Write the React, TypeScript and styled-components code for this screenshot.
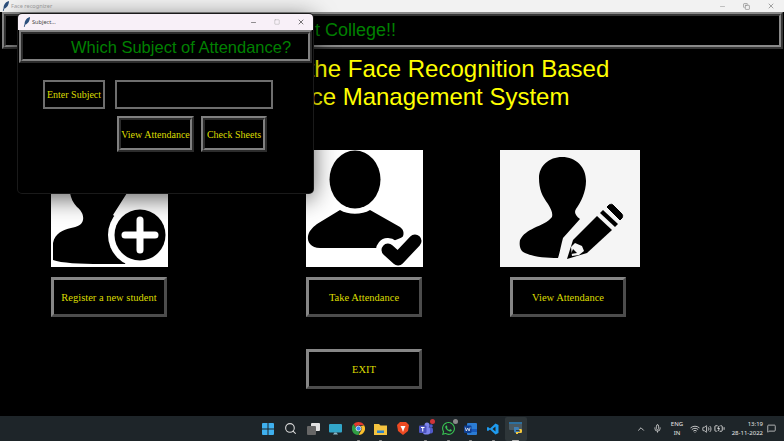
import { ReactElement, ReactNode } from "react";
import styled, { createGlobalStyle } from "styled-components";
import { BatteryCharging, ChevronUp, Copy, MessageSquare, Mic, Minus, Search, Square, Volume2, Wifi, X } from "lucide-react";
import { SiWhatsapp } from "react-icons/si";

const GlobalStyle = createGlobalStyle`
  html, body {
    background: #000;
    height: 100%;
    margin: 0;
    overflow: hidden;
  }
`;

function Feather(): ReactElement {
  return (
    <svg width="8" height="10" viewBox="0 0 8 10">
      <path d="M7 0C3.500 1 1.500 4 1.600 7L.8 9.800l.8.100.8-2.400C5 7 7 3.500 7 0z" fill="#2c4f7c" />
    </svg>
  );
}

function RegisterPicture(): ReactElement {
  return (
    <svg width="117" height="117" viewBox="0 0 117 117">
      <rect width="117" height="117" fill="#fff" />
      <ellipse cx="48" cy="24" rx="27" ry="27" fill="#000" />
      <path d="M19 43c1 5 3 10 7 14 4 3 7 8 6 13-1 5-6 7-12 8-8 2-16 5-18 15v17c8 3 27 4 48 4h24l16-29-28-20 14-22z" fill="#000" />
      <circle cx="89" cy="85" r="32" fill="#fff" />
      <circle cx="89" cy="85" r="25.500" fill="#000" />
      <path d="M89 70v30M74 85h30" stroke="#fff" strokeWidth="7" strokeLinecap="round" />
    </svg>
  );
}

function TakePicture(): ReactElement {
  return (
    <svg width="117" height="117" viewBox="0 0 117 117">
      <rect width="117" height="117" fill="#fff" />
      <ellipse cx="49" cy="29.500" rx="25.500" ry="29" fill="#000" />
      <path d="M34 60c8 5 22 5 30 0l30 17c4 3 4 6 3 10L70 98H14C5 98 1 92 2 86c1-5 4-8 9-12z" fill="#000" />
      <path d="M82 100l10 9 17-18" fill="none" stroke="#fff" strokeWidth="24" strokeLinecap="round" strokeLinejoin="round" />
      <path d="M82 100l10 9 17-18" fill="none" stroke="#000" strokeWidth="13" strokeLinecap="round" strokeLinejoin="round" />
    </svg>
  );
}

function ViewPicture(): ReactElement {
  return (
    <svg width="140" height="117" viewBox="0 0 140 117">
      <rect width="140" height="117" fill="#f5f5f5" />
      <path d="M62 7c14 0 24 10 24 24 0 11-5 21-10 28-2 3-1 6 4 10L63 88c-2 7-3 14-5 20-12 0-24-1-33-5-5-2-6-8-5-13 3-6 8-9 14-12 7-3 14-6 18-11 1-4-1-8-4-13-6-8-9-15-9-26C39 16 49 7 62 7z" fill="#000" />
      <path d="M67 109l6-19 24-24 15 14-25 23z" fill="#000" />
      <path d="M100 63l3-3 15 14-3 3z" fill="#000" />
      <path d="M107 57l2-2c2-1 3-1 4 0l8 8c2 2 2 3 1 5l-2 2z" fill="#000" stroke="#000" strokeWidth="1" strokeLinejoin="round" />
      <path d="M75 93l7 3 2 5-5 4-7 1-1-9z" fill="#f5f5f5" />
      <path d="M71 104l2-5 4 4z" fill="#000" />
    </svg>
  );
}

function WindowsLogo(): ReactElement {
  return (
    <svg width="12" height="12" viewBox="0 0 12 12">
      <path d="M0 1a1 1 0 0 1 1-1h4.500v5.500H0zM6.500 0H11a1 1 0 0 1 1 1v4.500H6.500zM0 6.500h5.500V12H1a1 1 0 0 1-1-1zM6.500 6.500H12V11a1 1 0 0 1-1 1H6.500z" fill="#3fb0ee" />
    </svg>
  );
}

function TaskViewIcon(): ReactElement {
  return (
    <svg width="13" height="12" viewBox="0 0 13 12">
      <rect x="4" width="9" height="8" rx="1" fill="#e2e2e2" />
      <rect y="3" width="9" height="9" rx="1" fill="#666" />
    </svg>
  );
}

function ChatIcon(): ReactElement {
  return (
    <svg width="13" height="12" viewBox="0 0 13 12">
      <rect y="1" width="13" height="8.500" rx="1" fill="#32a6c9" />
      <path d="M4 11.500h5L7.500 9.500h-2z" fill="#8ab8c8" />
    </svg>
  );
}

function ChromeIcon(): ReactElement {
  return (
    <svg width="13" height="13" viewBox="0 0 24 24">
      <path d="M12 0a12 12 0 0 1 10.400 6H12a6 6 0 0 0-5.600 3.800L3 3.800A12 12 0 0 1 12 0z" fill="#e33b2e" />
      <path d="M22.400 6A12 12 0 0 1 12 24l5.200-9A6 6 0 0 0 16 8z" fill="#fbc02d" />
      <path d="M12 24A12 12 0 0 1 3 3.800L8 12a6 6 0 0 0 6 5.700z" fill="#2f9e44" />
      <circle cx="12" cy="12" r="4.600" fill="#3f87f5" stroke="#fff" strokeWidth="1.400" />
    </svg>
  );
}

function FilesIcon(): ReactElement {
  return (
    <svg width="13" height="12" viewBox="0 0 13 12">
      <path d="M0 1h5l1.500 1.500H13V12H0z" fill="#f4c33f" />
      <rect x="3" y="7.500" width="7" height="2.500" fill="#2e83c9" />
    </svg>
  );
}

function BraveIcon(): ReactElement {
  return (
    <svg width="12" height="13" viewBox="0 0 12 13">
      <path d="M3 0h6l2 2 1 1-1 6-5 4-5-4-1-6 1-1z" fill="#ee4a22" />
      <path d="M3.500 4h5L7 7l-1 3-1-3z" fill="#fff" />
    </svg>
  );
}

function TeamsIcon(): ReactElement {
  return (
    <svg width="14" height="13" viewBox="0 0 14 13">
      <circle cx="8" cy="3" r="2.500" fill="#7b83eb" />
      <circle cx="12" cy="4" r="1.800" fill="#5059c9" />
      <rect x="7" y="5.500" width="7" height="6" rx="2" fill="#5059c9" />
      <rect x="4" y="5" width="7" height="7.500" rx="2" fill="#7b83eb" />
      <rect y="3.500" width="7.500" height="7.500" rx="1" fill="#4b53bc" />
      <path d="M2 5.500h3.500M3.750 5.500V9.500" stroke="#fff" strokeWidth="1" />
    </svg>
  );
}

function WordIcon(): ReactElement {
  return (
    <svg width="13" height="12" viewBox="0 0 13 12">
      <rect x="3" width="10" height="12" rx="1" fill="#2b7cd3" />
      <rect x="3" y="6" width="10" height="3" fill="#185abd" />
      <rect y="2.500" width="7.500" height="7.500" rx="1" fill="#103f91" />
      <path d="M1.300 4.500l1 3.500 1.400-3 1.400 3 1-3.500" fill="none" stroke="#fff" strokeWidth=".7" />
    </svg>
  );
}

function CodeIcon(): ReactElement {
  return (
    <svg width="12" height="12" viewBox="0 0 24 24">
      <path d="M17 1l6 3v16l-6 3L6 13l-4 3-2-1V9l2-1 4 3zM17 7l-6 5 6 5z" fill="#1f9cf0" fillRule="evenodd" />
    </svg>
  );
}

function PythonIcon(): ReactElement {
  return (
    <svg width="14" height="13" viewBox="0 0 14 13">
      <rect y="0" width="13" height="8" rx="1" fill="#4a5a63" />
      <rect y="0" width="13" height="2" fill="#2d6f9e" />
      <path d="M5 5h4c1 0 1 1 1 2v1H7v1h3v2H7c-1 0-2-1-2-2z" fill="#3f7fb5" />
      <path d="M10 7h2c1 0 1 1 1 2s0 2-1 2h-3v1H7v-2h3c1 0 1-1 0-3z" fill="#f5c93c" />
    </svg>
  );
}

const apps: { icon: ReactNode; running?: boolean; active?: boolean; badge?: string }[] = [
  { icon: <WindowsLogo /> },
  { icon: <Search size={13} color="#d8d8d8" /> },
  { icon: <TaskViewIcon /> },
  { icon: <ChatIcon /> },
  { icon: <ChromeIcon />, running: true },
  { icon: <FilesIcon />, running: true },
  { icon: <BraveIcon /> },
  { icon: <TeamsIcon />, running: true, badge: "#d13438" },
  { icon: <SiWhatsapp size={13} color="#38c653" />, running: true, badge: "#8a8a8a" },
  { icon: <WordIcon />, running: true },
  { icon: <CodeIcon />, running: true },
  { icon: <PythonIcon />, running: true, active: true },
];

export default function App(): ReactElement {
  return (
    <Desktop>
      <GlobalStyle />
      <MainTitleBar>
        <Feather />
        <MainTitle>Face recognizer</MainTitle>
        <WindowControls>
          <Minus size={7} color="#999" />
          <Copy size={7} color="#777" />
          <X size={8} color="#777" />
        </WindowControls>
      </MainTitleBar>
      <Banner>t College!!</Banner>
      <Heading>
        Welcome to the Face Recognition Based
        <br />
        Attendance Management System
      </Heading>
      <MenuGrid>
        <RegisterPicture />
        <TakePicture />
        <ViewPicture />
        <MainButton>Register a new student</MainButton>
        <MainButton>Take Attendance</MainButton>
        <ViewButtonCell>
          <MainButton>View Attendance</MainButton>
        </ViewButtonCell>
        <ExitCell>
          <MainButton>EXIT</MainButton>
        </ExitCell>
      </MenuGrid>
      <Taskbar>
        {apps.map((app, i) => (
          <AppSlot key={i} $active={app.active}>
            {app.icon}
            {app.badge && <AppBadge $color={app.badge} />}
            {app.running && <RunningDot $active={app.active} />}
          </AppSlot>
        ))}
        <Tray>
          <TraySlot $width={16}><ChevronUp size={10} color="#ddd" /></TraySlot>
          <TraySlot $width={16}><Mic size={9} color="#ddd" /></TraySlot>
          <TraySlot $width={24}><LanguageText>ENG<br />IN</LanguageText></TraySlot>
          <TraySlot $width={12}><Wifi size={10} color="#ddd" /></TraySlot>
          <TraySlot $width={12}><Volume2 size={10} color="#ddd" /></TraySlot>
          <TraySlot $width={12}><BatteryCharging size={11} color="#ddd" /></TraySlot>
          <Clock>13:19<br />28-11-2022</Clock>
          <TraySlot $width={16}><MessageSquare size={9} color="#ddd" /></TraySlot>
        </Tray>
      </Taskbar>

      <Dialog>
        <DialogTitleBar>
          <Feather />
          <DialogTitle>Subject...</DialogTitle>
          <DialogControls>
            <Minus size={7} color="#444" />
            <Square size={6} color="#aaa" />
            <X size={8} color="#333" />
          </DialogControls>
        </DialogTitleBar>
        <DialogBanner>Which Subject of Attendance?</DialogBanner>
        <SubjectRow>
          <SubjectLabel>Enter Subject</SubjectLabel>
          <SubjectInput />
        </SubjectRow>
        <ActionRow>
          <DialogButton>View Attendance</DialogButton>
          <DialogButton>Check Sheets</DialogButton>
        </ActionRow>
      </Dialog>
    </Desktop>
  );
}

const Desktop = styled.div`
  background: #000;
  display: flex;
  flex-direction: column;
  height: 441px;
  overflow: hidden;
  position: relative;
  width: 784px;
`;

const MainTitleBar = styled.div`
  align-items: center;
  background: #f2f2f2;
  box-sizing: border-box;
  display: flex;
  flex: none;
  height: 12px;
  padding: 0 9px 0 2px;
`;

const MainTitle = styled.span`
  color: #a4a4a4;
  font-family: "Noto Sans", sans-serif;
  font-size: 5.6px;
  margin-left: 1px;
`;

const WindowControls = styled.div`
  align-items: center;
  display: flex;
  gap: 17px;
  margin-left: auto;
`;

const Banner = styled.div`
  background: #000;
  border: 4px ridge #8a8a8a;
  box-sizing: border-box;
  color: #008000;
  flex: none;
  font-family: "Liberation Sans", Arial, sans-serif;
  font-size: 18px;
  height: 37px;
  line-height: 29px;
  margin: 0 1px 0 2px;
  padding-left: 309px;
`;

const Heading = styled.h1`
  color: #ffff00;
  flex: none;
  font-family: "Liberation Sans", Arial, sans-serif;
  font-size: 24px;
  font-weight: 400;
  line-height: 28px;
  margin: 6px 0 0;
  text-align: center;
`;

const MenuGrid = styled.div`
  display: grid;
  flex: none;
  grid-template-columns: 255px 194px 140px;
  grid-template-rows: 117px 40px 39px;
  margin-top: 39px;
  padding-left: 51px;
  row-gap: 10px;

  svg {
    display: block;
  }
`;

const MainButton = styled.button`
  background: #000;
  border: 3px solid;
  border-color: #868686 #4c4c4c #4c4c4c #868686;
  box-sizing: border-box;
  color: #dcdc00;
  font-family: "Liberation Serif", "Times New Roman", serif;
  font-size: 10.5px;
  height: 40px;
  padding: 0;
  width: 116px;
`;

const ViewButtonCell = styled.div`
  padding-left: 10px;
`;

const ExitCell = styled.div`
  grid-column: 2;
  margin-top: 22px;
`;

const Taskbar = styled.div`
  align-items: center;
  background: #1e2529;
  bottom: 0;
  box-sizing: border-box;
  display: flex;
  height: 25px;
  left: 0;
  padding-left: 257px;
  position: absolute;
  right: 0;
`;

const AppSlot = styled.div<{ $active?: boolean }>`
  align-items: center;
  background: ${(p) => (p.$active ? "#2e3639" : "transparent")};
  border-radius: 2px;
  display: flex;
  flex: none;
  height: 24px;
  justify-content: center;
  position: relative;
  width: 22.5px;
`;

const AppBadge = styled.span<{ $color: string }>`
  background: ${(p) => p.$color};
  border-radius: 50%;
  height: 5px;
  position: absolute;
  right: 2px;
  top: 2px;
  width: 5px;
`;

const RunningDot = styled.span<{ $active?: boolean }>`
  background: ${(p) => (p.$active ? "#b8b8b8" : "#8d8d8d")};
  border-radius: 1px;
  bottom: 0;
  height: 1px;
  left: 50%;
  margin-left: ${(p) => (p.$active ? "-3.5px" : "-1.5px")};
  position: absolute;
  width: ${(p) => (p.$active ? "7px" : "3px")};
`;

const Tray = styled.div`
  align-items: center;
  display: flex;
  margin-left: auto;
  padding-right: 5px;
`;

const TraySlot = styled.div<{ $width: number }>`
  align-items: center;
  display: flex;
  justify-content: center;
  width: ${(p) => p.$width}px;
`;

const LanguageText = styled.div`
  color: #e6e6e6;
  font-family: "Noto Sans", sans-serif;
  font-size: 6px;
  line-height: 9px;
  text-align: center;
`;

const Clock = styled.div`
  color: #e6e6e6;
  font-family: "Noto Sans", sans-serif;
  font-size: 6px;
  line-height: 9px;
  text-align: right;
  width: 38px;
`;

const Dialog = styled.div`
  background: #000;
  border-radius: 4px;
  box-shadow: 0 0 0 1px #1a1a1a, 0 5px 24px rgba(0, 0, 0, 0.65);
  box-sizing: border-box;
  display: flex;
  flex-direction: column;
  height: 179px;
  left: 18px;
  overflow: hidden;
  position: absolute;
  top: 14px;
  width: 295px;
`;

const DialogTitleBar = styled.div`
  align-items: center;
  background: #f8f0f8;
  box-sizing: border-box;
  display: flex;
  flex: none;
  height: 16px;
  padding: 0 8px 0 5px;
`;

const DialogTitle = styled.span`
  color: #444;
  font-family: "Noto Sans", sans-serif;
  font-size: 5.6px;
  margin-left: 1px;
`;

const DialogControls = styled.div`
  align-items: center;
  display: flex;
  gap: 17px;
  margin-left: auto;
`;

const DialogBanner = styled.div`
  border: 4px ridge #808080;
  box-sizing: border-box;
  color: #008000;
  flex: none;
  font-family: "Liberation Sans", Arial, sans-serif;
  font-size: 16.5px;
  height: 33px;
  line-height: 27px;
  margin: 0 1px;
  padding-left: 48px;
  white-space: nowrap;
`;

const SubjectRow = styled.div`
  display: flex;
  gap: 10px;
  margin-top: 17px;
  padding-left: 25px;
`;

const SubjectLabel = styled.div`
  align-items: center;
  border: 2px solid #6e6e6e;
  box-sizing: border-box;
  color: #dcdc00;
  display: flex;
  font-family: "Liberation Serif", "Times New Roman", serif;
  font-size: 10px;
  height: 29px;
  justify-content: center;
  white-space: nowrap;
  width: 62px;
`;

const SubjectInput = styled.input`
  background: #000;
  border: 2px solid #6e6e6e;
  box-sizing: border-box;
  height: 29px;
  outline: none;
  width: 158px;
`;

const ActionRow = styled.div`
  column-gap: 7px;
  display: grid;
  grid-template-columns: 77px 66px;
  margin-top: 7px;
  padding-left: 99px;
`;

const DialogButton = styled.button`
  background: #000;
  border: 4px ridge #808080;
  box-sizing: border-box;
  color: #dcdc00;
  font-family: "Liberation Serif", "Times New Roman", serif;
  font-size: 10px;
  height: 36px;
  padding: 0;
  white-space: nowrap;
  width: 100%;
`;
